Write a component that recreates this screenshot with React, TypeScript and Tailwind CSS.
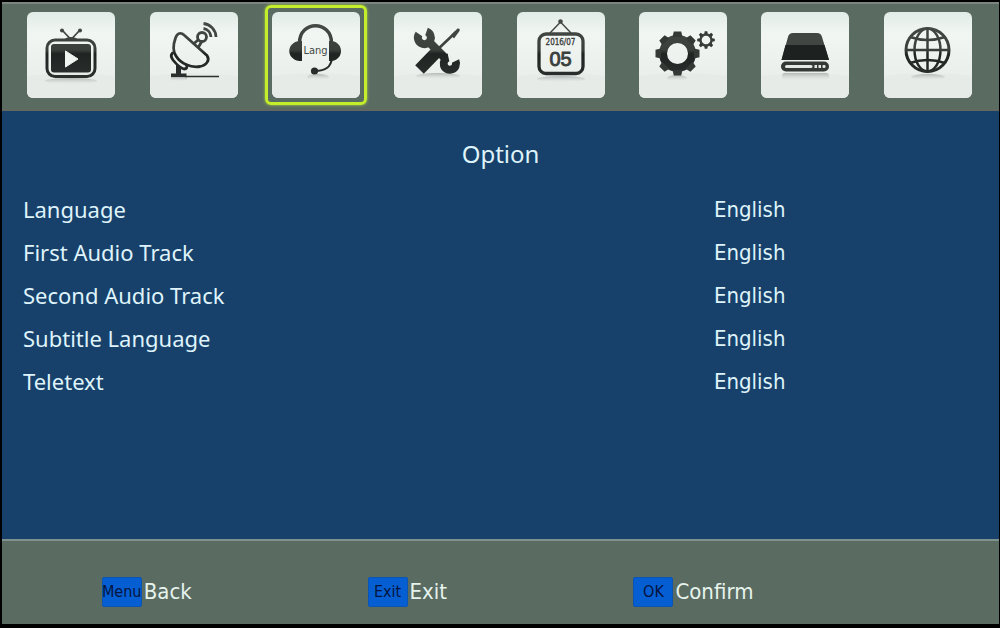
import type { ReactNode } from "react";

const INK = "url(#ink)";

function Shadow({ y, w }: { y: number; w: number }) {
  return <ellipse cx="44" cy={y} rx={w} ry="3" fill="url(#shade)" />;
}

function TvIcon() {
  return (
    <>
      <Shadow y={69} w={26} />
      <g stroke={INK} fill="none">
        <rect x="20" y="28" width="48" height="36.500" rx="8" strokeWidth="3" />
        <path d="M35 18 L43.500 27 M53 18 L44.500 27" strokeWidth="1.800" />
      </g>
      <g fill={INK}>
        <circle cx="35" cy="18.500" r="2" />
        <circle cx="53" cy="18.500" r="2" />
        <path d="M37 28 C39 24 49 24 51 28 Z" />
        <rect x="24" y="32" width="40" height="28.500" rx="3" />
      </g>
      <path d="M38.500 39 L51 47 L38.500 55 Z" fill="#f0f4f1" stroke="#f0f4f1" strokeLinejoin="round" />
    </>
  );
}

function DishIcon() {
  return (
    <>
      <rect x="21" y="65" width="16" height="4" fill="url(#shade)" />
      <g stroke={INK} fill="none" strokeWidth="2.800" strokeLinejoin="round" strokeLinecap="round">
        <path d="M34 23 C31 20 27 21 25.500 26 C23 33 22.500 39 26 44 C31 52 41 56 50 54.500 C57 53 60 48 57 43.500 Z" />
        <path d="M22.500 41 C20.500 43 21.500 46 23 48 C27 53 30 56 34 57 C37 57 37.500 55 36.500 53" />
        <circle cx="52" cy="25" r="4.500" />
        <path d="M48 28 L44 31.500 M51.500 30 L48.500 35" />
        <path d="M53.500 16.500 A9 9 0 0 1 61 25" strokeLinecap="butt" />
        <path d="M53.500 11.500 A14 14 0 0 1 66 25" strokeLinecap="butt" />
      </g>
      <path d="M26 51 L31 55 V61.500 H36.500 V65 H21 V61.500 H26 Z" fill={INK} />
      <path d="M35 64.500 H69" stroke={INK} strokeWidth="1.300" />
    </>
  );
}

function HeadsetIcon() {
  return (
    <>
      <ellipse cx="46" cy="65" rx="11" ry="3" fill="url(#shade)" />
      <g stroke={INK} fill="none" strokeWidth="3">
        <path d="M27.500 31 C27.500 8 59.500 8 59.500 31" strokeWidth="3.400" />
        <path d="M60 46 C59 55 54 59 43 59" strokeWidth="2.200" />
      </g>
      <g fill={INK}>
        <path d="M30 29 H27 C14 31 14 47 27 49 H30 Z" />
        <path d="M57 29 H60 C72 31 72 47 60 49 H57 Z" />
        <circle cx="42.500" cy="59" r="3.600" />
      </g>
      <text x="43.500" y="42" textAnchor="middle" fill="#444946" className="font-[DejaVu_Sans_Condensed,sans-serif] text-[11px]">
        Lang
      </text>
    </>
  );
}

function ToolsIcon() {
  return (
    <>
      <Shadow y={64} w={22} />
      <g stroke={INK} fill="none">
        <path d="M32.500 19.500 A6.500 6.500 0 1 1 25 22" strokeWidth="8" />
        <path d="M61.500 49 A6.200 6.200 0 1 1 54.500 45.500" strokeWidth="8" />
        <path d="M34 29 L51 46" strokeWidth="8.500" />
        <path d="M25.500 57.500 L43.500 39" strokeWidth="12" />
        <path d="M42 39 L62 20" strokeWidth="2.600" />
      </g>
      <path d="M57 23 L63.500 16.500 Q66.500 16 65.500 19 L60 26.500 Z" fill={INK} />
    </>
  );
}

function CalendarIcon() {
  return (
    <>
      <Shadow y={67} w={24} />
      <g stroke={INK} fill="none">
        <rect x="22" y="22" width="44" height="39.500" rx="7" strokeWidth="3.300" />
        <path d="M33 21 L43.500 10 L54 21" strokeWidth="1.500" />
      </g>
      <circle cx="43.500" cy="9.500" r="2.300" fill={INK} />
      <g fill="#3b403d" textAnchor="middle">
        <text x="43.500" y="33" stroke="#3b403d" strokeWidth="0.300" className="font-[DejaVu_Sans_Condensed,sans-serif] text-[8px]">
          2016/07
        </text>
        <text x="43.500" y="54" stroke="#3b403d" strokeWidth="0.900" className="font-[Liberation_Sans,sans-serif] text-[20px]">
          05
        </text>
      </g>
    </>
  );
}

const TEETH = [0, 45, 90, 135, 180, 225, 270, 315];

function GearsIcon() {
  return (
    <>
      <ellipse cx="38" cy="66" rx="10" ry="3" fill="url(#shade)" />
      <g stroke={INK} fill="none">
        <circle cx="38.500" cy="41.500" r="14.500" strokeWidth="8" />
        <circle cx="67" cy="28" r="5.500" strokeWidth="2.400" />
      </g>
      <g fill="#343936">
        {TEETH.map((a) => (
          <g key={a}>
            <path d="M33.500 25 L34.800 19.500 H42.200 L43.500 25 Z" transform={`rotate(${a} 38.500 41.500)`} />
            <path d="M65.200 22.500 L65.700 19.200 H68.300 L68.800 22.500 Z" transform={`rotate(${a} 67 28)`} />
          </g>
        ))}
      </g>
    </>
  );
}

function DriveIcon() {
  return (
    <>
      <rect x="21" y="61" width="47" height="7" rx="3" fill="url(#shade)" />
      <path d="M32 21 H56 Q60 21 61 25 L68 48 H20.500 L27 25 Q28 21 32 21 Z" fill="#414643" />
      <path d="M24.500 33 H63.500 L68 48 H20.500 Z" fill="#1d211f" />
      <rect x="20" y="49.500" width="48" height="10" rx="5" fill="#343936" />
      <g fill="#e2e8e4">
        <rect x="24" y="53" width="27.500" height="3" rx="1.500" />
        <rect x="53.500" y="53" width="2.500" height="3" />
        <rect x="57.500" y="53" width="2.500" height="3" />
        <rect x="61.500" y="53" width="3" height="3" rx="1" />
      </g>
    </>
  );
}

function GlobeIcon() {
  return (
    <>
      <Shadow y={65} w={17} />
      <g stroke={INK} fill="none" strokeWidth="2.500">
        <circle cx="43.500" cy="38" r="21.500" strokeWidth="3" />
        <ellipse cx="43.500" cy="38" rx="13" ry="21.500" />
        <path d="M43.500 15 V60.500 M21 38 H66" />
        <path d="M26 25 Q43.500 31 61 25 M26 51 Q43.500 45 61 51" />
      </g>
    </>
  );
}

const MENU: { name: string; icon: ReactNode; active?: boolean }[] = [
  { name: "Channels", icon: <TvIcon /> },
  { name: "Installation", icon: <DishIcon /> },
  { name: "Option", icon: <HeadsetIcon />, active: true },
  { name: "Tools", icon: <ToolsIcon /> },
  { name: "Date", icon: <CalendarIcon /> },
  { name: "System", icon: <GearsIcon /> },
  { name: "Storage", icon: <DriveIcon /> },
  { name: "Network", icon: <GlobeIcon /> },
];

const OPTIONS = ["Language", "First Audio Track", "Second Audio Track", "Subtitle Language", "Teletext"];

const KEYS = [
  { cap: "Menu", action: "Back" },
  { cap: "Exit", action: "Exit" },
  { cap: "OK", action: "Confirm" },
];

function Gradients() {
  return (
    <svg className="absolute size-0" aria-hidden="true">
      <defs>
        <linearGradient id="ink" gradientUnits="userSpaceOnUse" x1="0" y1="10" x2="0" y2="66">
          <stop offset="0" stopColor="#454a47" />
          <stop offset="0.500" stopColor="#3a3f3c" />
          <stop offset="0.570" stopColor="#1f2321" />
          <stop offset="1" stopColor="#2b2f2d" />
        </linearGradient>
        <linearGradient id="shade" x1="0" y1="0" x2="0" y2="1">
          <stop offset="0" stopColor="#8d9491" stopOpacity="0.600" />
          <stop offset="1" stopColor="#c9cfcc" stopOpacity="0" />
        </linearGradient>
      </defs>
    </svg>
  );
}

export default function App() {
  return (
    <div className="flex min-h-screen flex-col bg-black pt-[2px] pr-px pb-1 pl-[2px] font-[Noto_Sans,sans-serif] text-[22px] text-[#dff3fa]">
      <Gradients />
      <header className="border-y-2 border-t-[#7d8580] border-b-[#626760] bg-[#5a6b62]">
        <nav className="grid grid-cols-8 justify-items-center pt-px pr-[10px] pb-1 pl-2">
          {MENU.map(({ name, icon, active }) => (
            <button
              key={name}
              aria-label={name}
              className={
                active
                  ? "rounded-md border-3 border-[#c4ee2c] p-1 shadow-[0_0_3px_#b0d93a]"
                  : "rounded-md border-3 border-transparent p-1"
              }
            >
              <svg
                viewBox="0 0 88 86"
                className="h-[86px] w-[88px] rounded-md bg-linear-to-b from-[#e1ece7] via-[#f1f6f3] via-25% to-[#e6ebe8]"
                aria-hidden="true"
              >
                <path d="M0 64 Q44 58 88 64 V86 H0 Z" fill="#e6ebe8" />
                {icon}
              </svg>
            </button>
          ))}
        </nav>
      </header>

      <main className="flex-1 bg-[#17416b] pt-[23px]">
        <h1 className="text-center text-[24px] leading-10">Option</h1>
        <div className="flex flex-col pt-[14px] pl-[21px]">
          {OPTIONS.map((option, i) => (
            <div key={option} className="grid grid-cols-[691fr_285fr] items-center leading-[43px]">
              <label htmlFor={`option-${i}`}>{option}</label>
              <select
                id={`option-${i}`}
                className="h-[43px] appearance-none justify-self-start bg-transparent font-[DejaVu_Sans_Condensed,DejaVu_Sans,sans-serif] outline-none"
              >
                <option>English</option>
              </select>
            </div>
          ))}
        </div>
      </main>

      <footer className="grid grid-cols-3 border-t-2 border-[#7e918c] bg-[#5a6b62] px-[10%] pt-9 pb-[17px] font-[DejaVu_Sans_Condensed,DejaVu_Sans,sans-serif] text-[#e6f3ec]">
        {KEYS.map(({ cap, action }) => (
          <button key={cap} className="flex items-center gap-[2px] text-left">
            <kbd className="flex h-[30px] w-10 items-center justify-center rounded-xs border border-[#0a55b4] bg-[#055fd3] font-[DejaVu_Sans_Condensed,DejaVu_Sans,sans-serif] text-[16px] text-[#04143f]">
              {cap}
            </kbd>
            <span className="leading-[30px]">{action}</span>
          </button>
        ))}
      </footer>
    </div>
  );
}
